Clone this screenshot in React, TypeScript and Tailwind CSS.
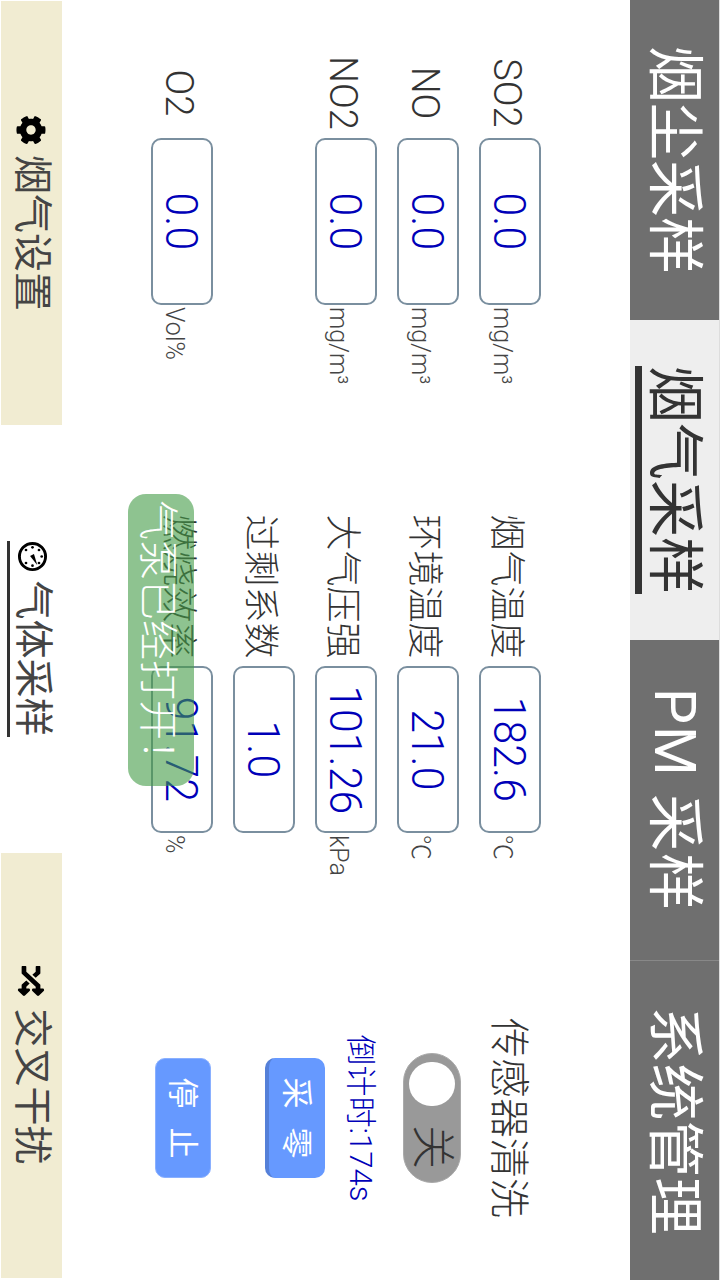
import React from 'react';
import { FaCog, FaRandom } from 'react-icons/fa';

interface FieldProps {
  label?: string;
  value?: string;
  unit?: string;
  labelClass?: string;
}

const Field: React.FC<FieldProps> = ({ label, value, unit, labelClass }) => {
  if (!value) return <div className="h-[62px]" />;
  return (
    <div className="flex h-[62px] items-baseline">
      <span className={`${labelClass} text-center font-light leading-none text-[#333]`}>{label}</span>
      <div className="flex h-[62px] w-[167px] shrink-0 items-center justify-center rounded-[10px] border-2 border-[#7a8f9f]">
        <span className="inline-block scale-x-95 text-[45px] font-light leading-none text-[#0000b8]">{value}</span>
      </div>
      <span className="ml-[2px] text-[25px] font-light leading-none text-[#444]">{unit}</span>
    </div>
  );
};

const ClockIcon = () => (
  <svg viewBox="0 0 32 32" className="h-[31px] w-[31px] text-black">
    <circle cx="16" cy="16" r="13.5" fill="none" stroke="currentColor" strokeWidth="3" />
    <g fill="currentColor">
      <circle cx="16" cy="6.5" r="1.4" />
      <circle cx="22.7" cy="9.3" r="1.4" />
      <circle cx="25.5" cy="16" r="1.4" />
      <circle cx="22.7" cy="22.7" r="1.4" />
      <circle cx="9.3" cy="22.7" r="1.4" />
      <circle cx="6.5" cy="16" r="1.4" />
      <circle cx="9.3" cy="9.3" r="1.4" />
      <path d="M13.5 14.5 L25 11 L15.5 18.5 Z" />
    </g>
  </svg>
);

const tabs = ['烟尘采样', '烟气采样', 'PM 采样', '系统管理'];

export default function App() {
  return (
    <div className="relative h-[1280px] w-[720px] overflow-hidden bg-white">
      {/* The whole app is shot sideways */}
      <div className="relative flex h-[720px] w-[1280px] origin-top-left translate-x-[720px] rotate-90 flex-col font-['Roboto','Noto_Sans_CJK_SC',sans-serif]">
        <div className="grid h-[90px] shrink-0 grid-cols-4 border-t border-[#ddd]">
          {tabs.map((t, i) => (
            <div
              key={t}
              className={
                i === 1
                  ? 'flex items-center justify-center bg-[#eeeeee] text-[#333]'
                  : i === 3
                    ? 'flex items-center justify-center border-l border-[#888] bg-[#6f6f6f] text-white'
                    : 'flex items-center justify-center bg-[#6f6f6f] text-white'
              }
            >
              <span
                className={
                  i === 1
                    ? 'text-[57px] leading-[62px] underline decoration-[#333] decoration-[7px] underline-offset-[13px] [text-decoration-skip-ink:none]'
                    : i === 2
                      ? 'text-[57px] leading-[62px] tracking-[2px]'
                      : 'text-[57px] leading-[62px]'
                }
              >
                {t}
              </span>
            </div>
          ))}
        </div>

        <div className="grid min-h-0 flex-1 grid-cols-[459px_493px_236px] pl-[48px]">
          <div className="flex flex-col gap-[20px] pt-[89px] text-[38px]">
            <Field label="SO2" value="0.0" unit="mg/m³" labelClass="w-[90px]" />
            <Field label="NO" value="0.0" unit="mg/m³" labelClass="w-[90px]" />
            <Field label="NO2" value="0.0" unit="mg/m³" labelClass="w-[90px]" />
            <Field />
            <Field label="O2" value="0.0" unit="Vol%" labelClass="w-[90px]" />
          </div>
          <div className="flex flex-col gap-[20px] pt-[89px] text-[36px]">
            <Field label="烟气温度" value="182.6" unit="℃" labelClass="w-[159px]" />
            <Field label="环境温度" value="21.0" unit="℃" labelClass="w-[159px]" />
            <Field label="大气压强" value="101.26" unit="kPa" labelClass="w-[159px]" />
            <Field label="过剩系数" value="1.0" labelClass="w-[159px]" />
            <Field label="燃烧效率" value="91.72" unit="%" labelClass="w-[159px]" />
          </div>
          <div className="flex flex-col items-center">
            <span className="mt-[102px] text-[40px] font-light leading-none text-[#333]">传感器清洗</span>
            <div className="mt-[27px] flex h-[58px] w-[130px] items-center rounded-full border border-[#aaa] bg-[#999] pl-[8px]">
              <div className="h-[46px] w-[44px] rounded-full bg-white" />
              <span className="ml-[19px] text-[44px] font-light leading-none text-[#333]">关</span>
            </div>
            <span className="mt-[27px] text-[31px] font-light leading-none text-[#0000b8]">倒计时:174s</span>
            <button className="mt-[20px] flex h-[60px] w-[120px] items-center justify-center gap-[19px] rounded-[10px] border-b-[4px] border-[#5580d8] bg-[#6699ff] text-[31px] leading-none text-white">
              <span>采</span>
              <span>零</span>
            </button>
            <button className="mt-[54px] flex h-[56px] w-[120px] items-center justify-center gap-[19px] rounded-[10px] border border-[#8ab0ff] bg-[#6699ff] text-[31px] leading-none text-white">
              <span>停</span>
              <span>止</span>
            </button>
          </div>
        </div>

        <div className="ml-px grid h-[62px] shrink-0 grid-cols-[424px_428px_425px] pb-px text-[39px] leading-none text-[#444]">
          <div className="flex items-center justify-center gap-[10px] bg-[#f1ecd2]">
            <FaCog className="h-[30px] w-[30px] text-black" />
            <span>烟气设置</span>
          </div>
          <div className="flex items-center justify-center">
            <div className="flex h-[48px] items-center gap-[8px] border-b-[3px] border-[#333]">
              <ClockIcon />
              <span>气体采样</span>
            </div>
          </div>
          <div className="flex items-center justify-center gap-[12px] bg-[#f1ecd2]">
            <FaRandom className="h-[30px] w-[30px] text-black" />
            <span>交叉干扰</span>
          </div>
        </div>

        {/* toast over the form */}
        <div className="absolute left-[494px] top-[526px] flex h-[66px] w-[292px] items-center justify-center rounded-[18px] bg-[#439b46]/60 pt-[8px] text-[40px] font-light leading-none text-white">
          气泵已经打开！
        </div>
      </div>
    </div>
  );
}
